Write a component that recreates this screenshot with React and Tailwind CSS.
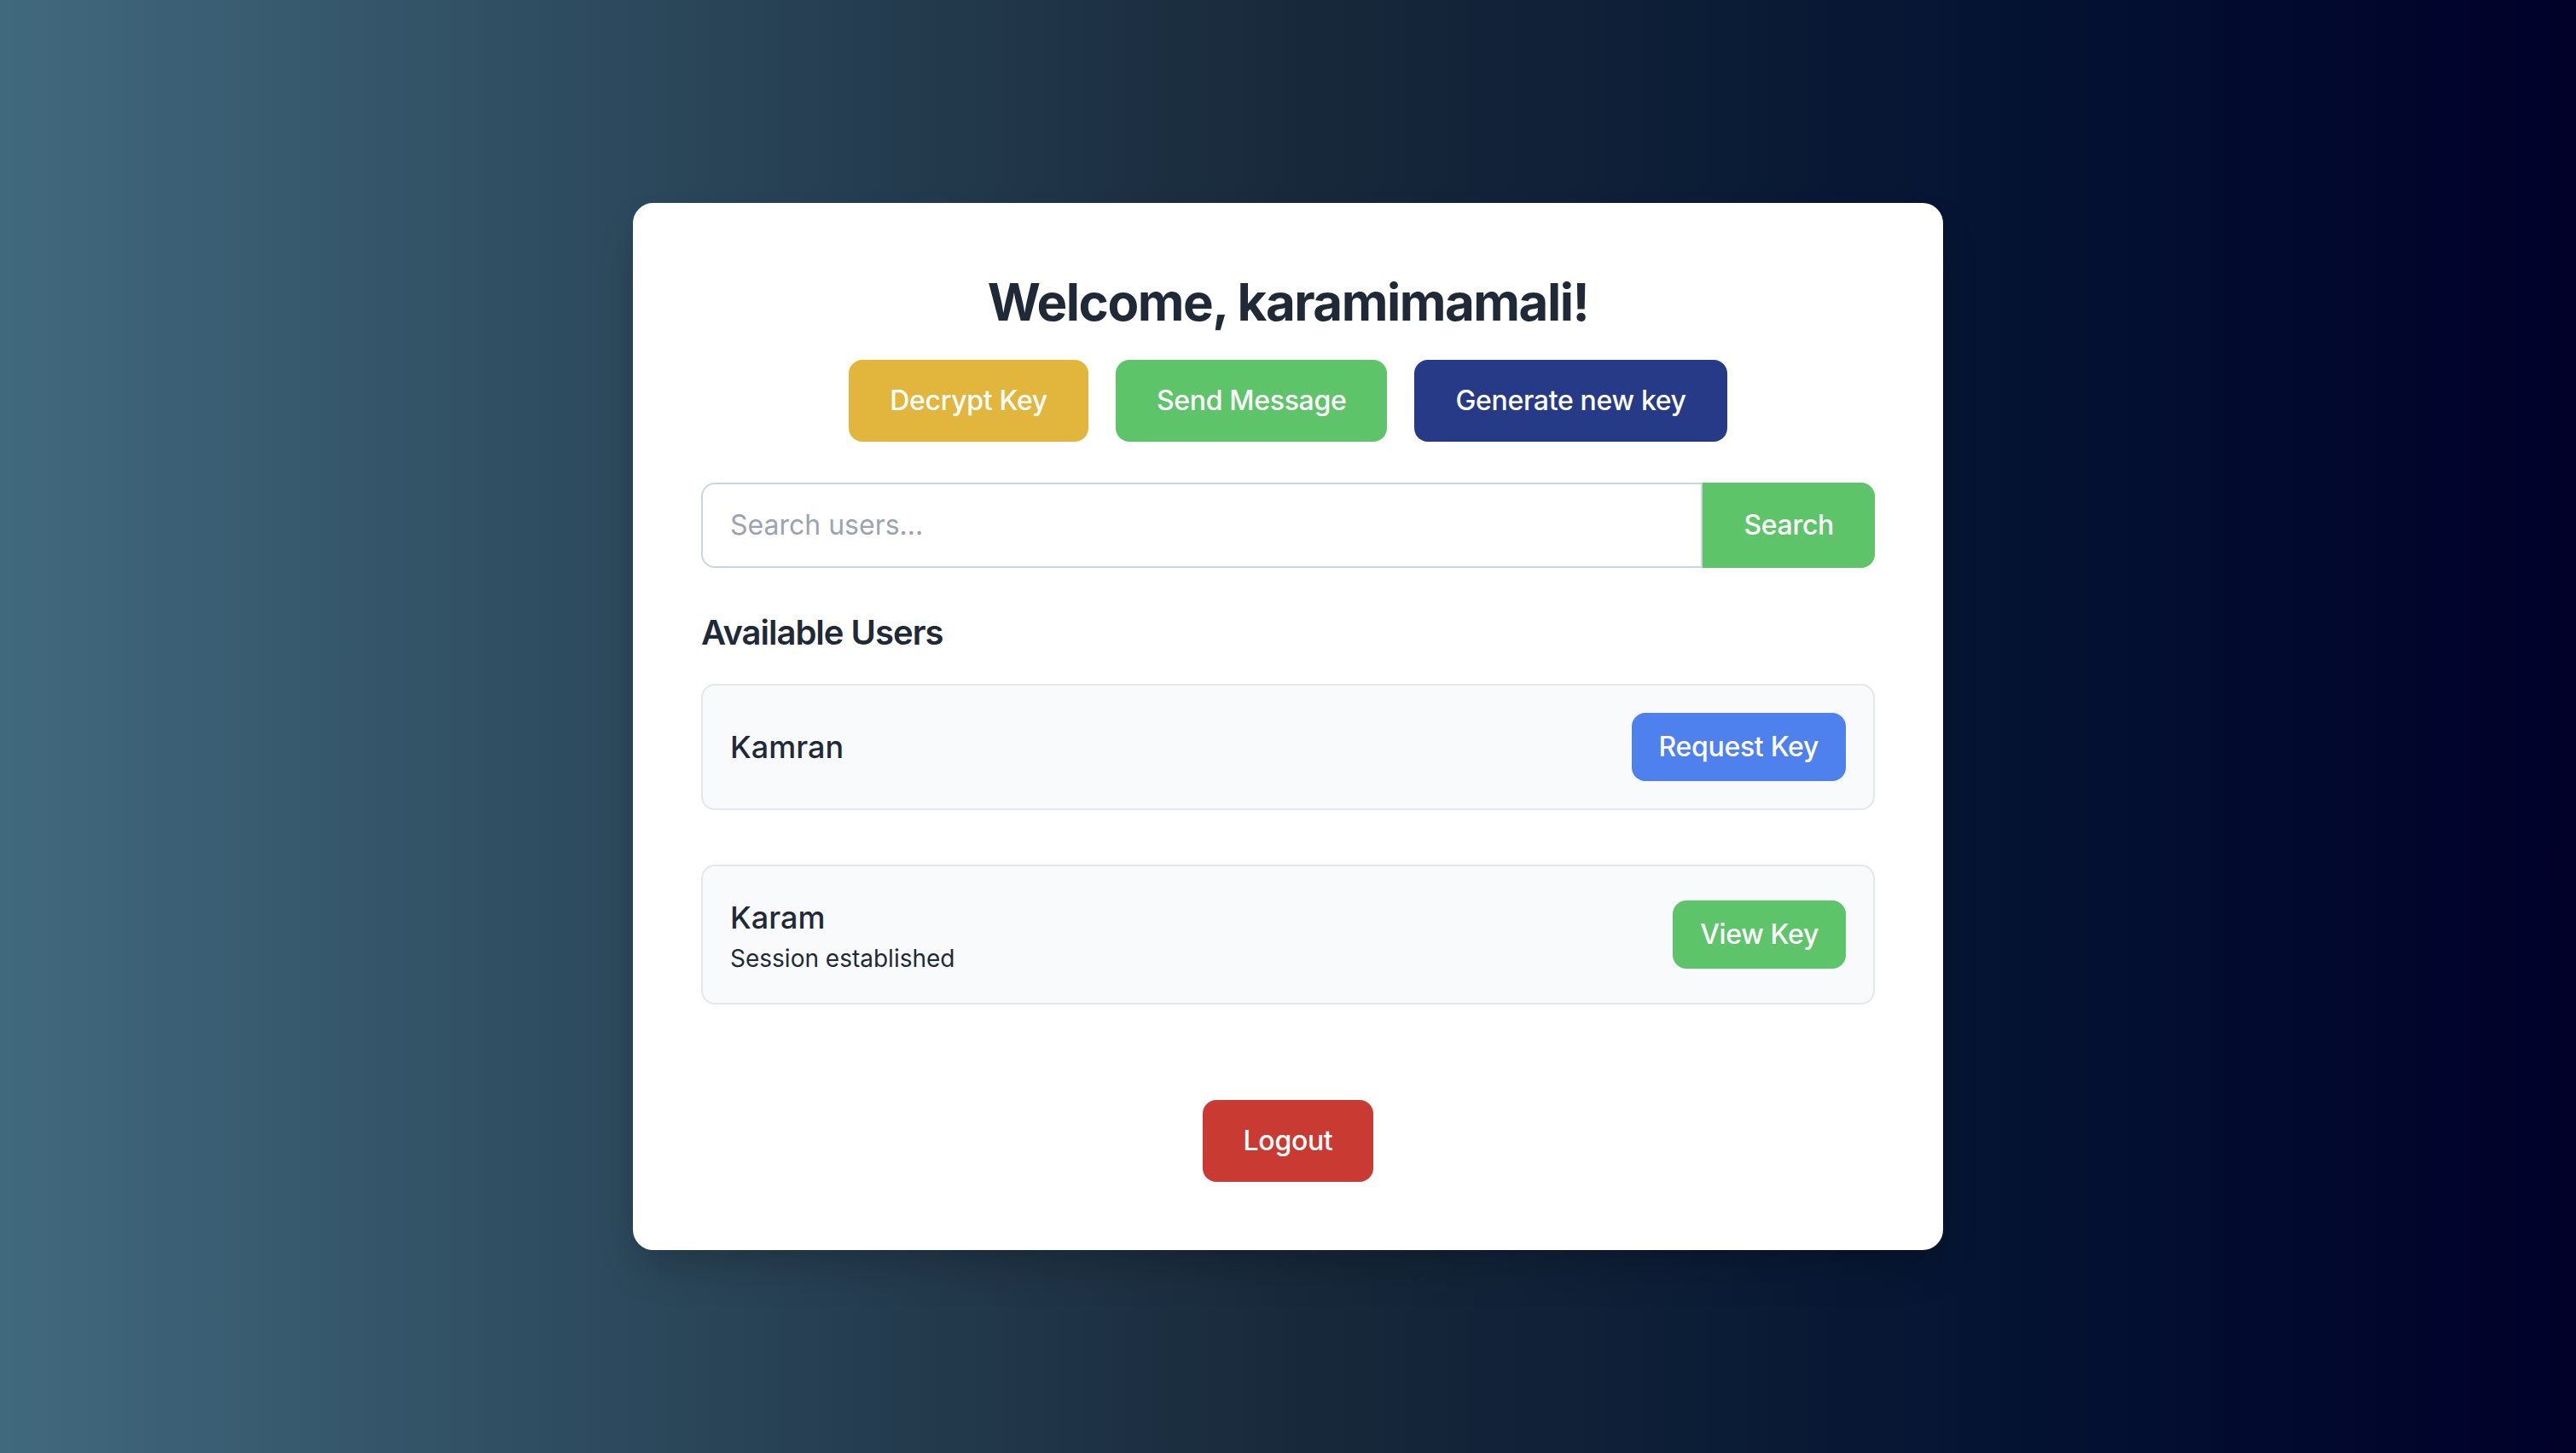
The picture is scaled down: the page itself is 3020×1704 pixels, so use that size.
export default function App() {
  const users = [
    { name: "Kamran", status: null, action: "Request Key", color: "bg-[#4f81ee]" },
    { name: "Karam", status: "Session established", action: "View Key", color: "bg-[#5ec46a]" },
  ];

  return (
    <div
      className="min-h-screen w-full flex items-center justify-center bg-gradient-to-r from-[#41697e] via-[#18293b] to-[#01012a]"
      style={{ fontFamily: "Inter, 'Noto Sans', sans-serif" }}
    >
      <div className="w-[1536px] bg-white rounded-[24px] p-[80px] shadow-2xl">
        {/* Heading */}
        <h1 className="text-center text-[60px] leading-[72px] font-bold tracking-tight text-[#1f2937] mb-[32px]">
          Welcome, karamimamali!
        </h1>

        {/* Actions */}
        <div className="flex justify-center gap-[32px] mb-[48px]">
          <button className="px-[48px] py-[24px] text-[32px] leading-[48px] font-medium tracking-[-0.01em] text-white bg-[#e2b53d] rounded-[16px]">
            Decrypt Key
          </button>
          <button className="px-[48px] py-[24px] text-[32px] leading-[48px] font-medium tracking-[-0.01em] text-white bg-[#5ec46a] rounded-[16px]">
            Send Message
          </button>
          <button className="px-[48px] py-[24px] text-[32px] leading-[48px] font-medium tracking-[-0.01em] text-white bg-[#263a87] rounded-[16px]">
            Generate new key
          </button>
        </div>

        {/* Search */}
        <div className="flex mb-[48px]">
          <input
            type="text"
            placeholder="Search users..."
            className="flex-1 border-2 border-[#cbd5e1] rounded-l-[16px] px-[32px] py-[24px] text-[32px] leading-[48px] text-[#1f2937] placeholder:text-[#9ca3af] outline-none"
          />
          <button className="px-[48px] text-[32px] leading-[48px] font-medium tracking-[-0.01em] text-white bg-[#5ec46a] rounded-r-[16px]">
            Search
          </button>
        </div>

        {/* Users */}
        <h2 className="text-[40px] leading-[56px] font-semibold tracking-tight text-[#1f2937] mb-[32px]">
          Available Users
        </h2>

        <div className="flex flex-col">
          {users.map((u) => (
            <div
              key={u.name}
              className="flex items-center justify-between border-2 border-[#e5e7eb] bg-[#f8fafc] rounded-[16px] p-[32px] mb-[64px]"
            >
              <div>
                <p className="text-[36px] leading-[56px] font-medium text-[#1f2937]">{u.name}</p>
                {u.status && (
                  <p className="text-[28px] leading-[40px] text-[#1f2937]">{u.status}</p>
                )}
              </div>
              <button
                className={`px-[32px] py-[16px] text-[32px] leading-[48px] font-medium tracking-[-0.01em] text-white rounded-[16px] ${u.color}`}
              >
                {u.action}
              </button>
            </div>
          ))}
        </div>

        {/* Logout */}
        <div className="flex justify-center mt-[48px]">
          <button className="px-[48px] py-[24px] text-[32px] leading-[48px] font-medium tracking-[-0.01em] text-white bg-[#c93a32] rounded-[16px]">
            Logout
          </button>
        </div>
      </div>
    </div>
  );
}
